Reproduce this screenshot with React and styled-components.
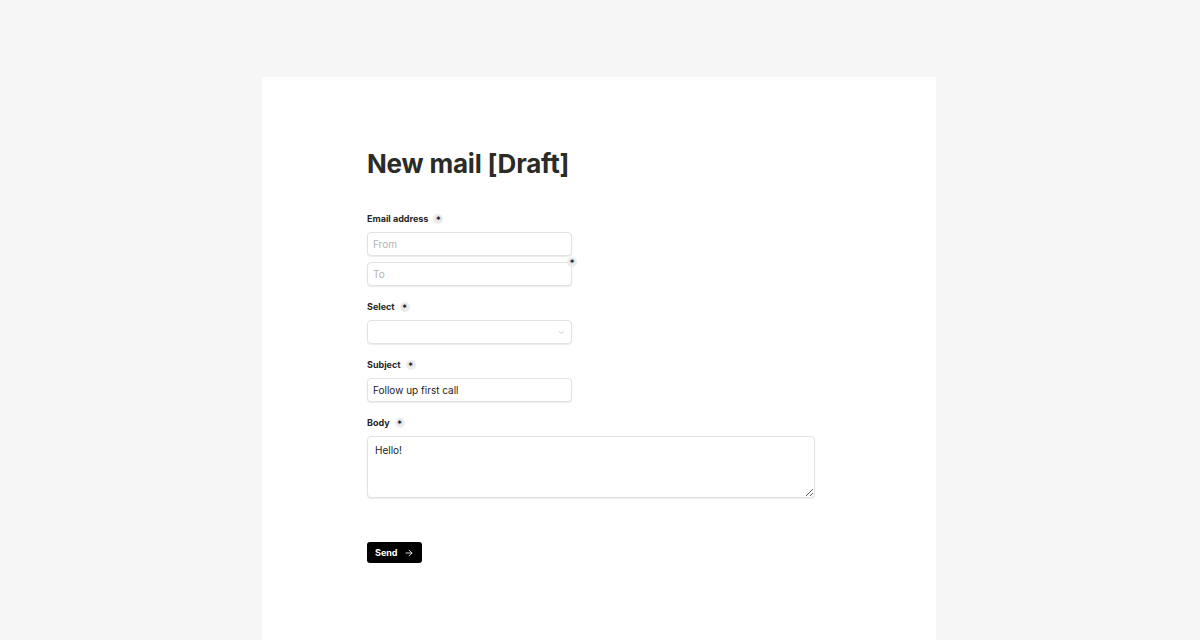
import styled, { createGlobalStyle } from "styled-components";
import { ChevronDown, ArrowRight } from "lucide-react";

const GlobalStyle = createGlobalStyle`
  html, body {
    margin: 0;
    padding: 0;
    background: #f6f6f6;
    font-family: "Inter", "Liberation Sans", sans-serif;
    color: #2b2b27;
  }
`;

const Page = styled.div`
  display: flex;
  justify-content: center;
  padding: 77px 2px 0 0;
  min-height: 640px;
  box-sizing: border-box;
`;

const Card = styled.main`
  width: 674px;
  min-height: 563px;
  background: #fff;
  box-sizing: border-box;
  padding: 70px 105px 60px;
`;

const Title = styled.h1`
  margin: 0 0 31px;
  font-size: 26px;
  line-height: 34px;
  font-weight: 700;
  letter-spacing: -0.2px;
  color: #2b2b27;
`;

const Form = styled.form`
  display: flex;
  flex-direction: column;
`;

const Field = styled.div`
  display: flex;
  flex-direction: column;
  gap: 6px;
  margin-bottom: 14px;
`;

const Label = styled.label`
  display: flex;
  align-items: center;
  gap: 5px;
  font-size: 9px;
  line-height: 14px;
  font-weight: 700;
  color: #262626;
`;

const Required = styled.span`
  display: inline-flex;
  align-items: center;
  justify-content: center;
  width: 10px;
  height: 10px;
  border-radius: 50%;
  background: #ececec;
  font-family: "DejaVu Sans", sans-serif;
  font-size: 8px;
  font-weight: 700;
  line-height: 1;
  color: #111;
  padding-top: 3px;
  box-sizing: border-box;
`;

const Stack = styled.div`
  display: flex;
  flex-direction: column;
  gap: 6px;
`;

const InputWrap = styled.div`
  position: relative;
  width: 205px;
`;

const Corner = styled(Required)`
  position: absolute;
  top: -5px;
  right: -5px;
`;

const Input = styled.input`
  display: block;
  width: 100%;
  height: 24px;
  box-sizing: border-box;
  border: 1px solid #e2e2e2;
  border-radius: 4px;
  box-shadow: 0 1px 1px rgba(0, 0, 0, 0.08);
  padding: 0 5px;
  font-family: inherit;
  font-size: 10px;
  color: #222;
  background: #fff;
  outline: none;

  &::placeholder {
    color: #b4b4b4;
  }
`;

const SelectBox = styled.div`
  width: 205px;
  height: 24px;
  box-sizing: border-box;
  border: 1px solid #e2e2e2;
  border-radius: 4px;
  box-shadow: 0 1px 1px rgba(0, 0, 0, 0.08);
  display: flex;
  align-items: center;
  justify-content: flex-end;
  padding-right: 5px;
  color: #a8a8a8;
`;

const TextArea = styled.textarea`
  display: block;
  width: 448px;
  height: 62px;
  box-sizing: border-box;
  border: 1px solid #e2e2e2;
  border-radius: 4px;
  box-shadow: 0 1px 1px rgba(0, 0, 0, 0.08);
  padding: 6px 7px;
  font-family: inherit;
  font-size: 10px;
  line-height: 14px;
  color: #222;
  outline: none;
  resize: vertical;
`;

const Send = styled.button`
  margin-top: 30px;
  align-self: flex-start;
  display: inline-flex;
  align-items: center;
  gap: 6px;
  height: 21px;
  padding: 0 8px;
  border: none;
  border-radius: 3px;
  background: #000;
  color: #fff;
  font-family: inherit;
  font-size: 9px;
  font-weight: 700;
  cursor: pointer;
`;

export default function App() {
  return (
    <>
      <GlobalStyle />
      <Page>
        <Card>
          <Title>New mail [Draft]</Title>
          <Form onSubmit={(e) => e.preventDefault()}>
            <Field>
              <Label>
                Email address <Required>*</Required>
              </Label>
              <Stack>
                <InputWrap>
                  <Input placeholder="From" />
                </InputWrap>
                <InputWrap>
                  <Input placeholder="To" />
                  <Corner>*</Corner>
                </InputWrap>
              </Stack>
            </Field>
            <Field>
              <Label>
                Select <Required>*</Required>
              </Label>
              <SelectBox>
                <ChevronDown size={9} strokeWidth={1.5} />
              </SelectBox>
            </Field>
            <Field>
              <Label>
                Subject <Required>*</Required>
              </Label>
              <InputWrap>
                <Input defaultValue="Follow up first call" />
              </InputWrap>
            </Field>
            <Field>
              <Label>
                Body <Required>*</Required>
              </Label>
              <TextArea defaultValue="Hello!" />
            </Field>
            <Send type="submit">
              Send <ArrowRight size={10} strokeWidth={2} />
            </Send>
          </Form>
        </Card>
      </Page>
    </>
  );
}
